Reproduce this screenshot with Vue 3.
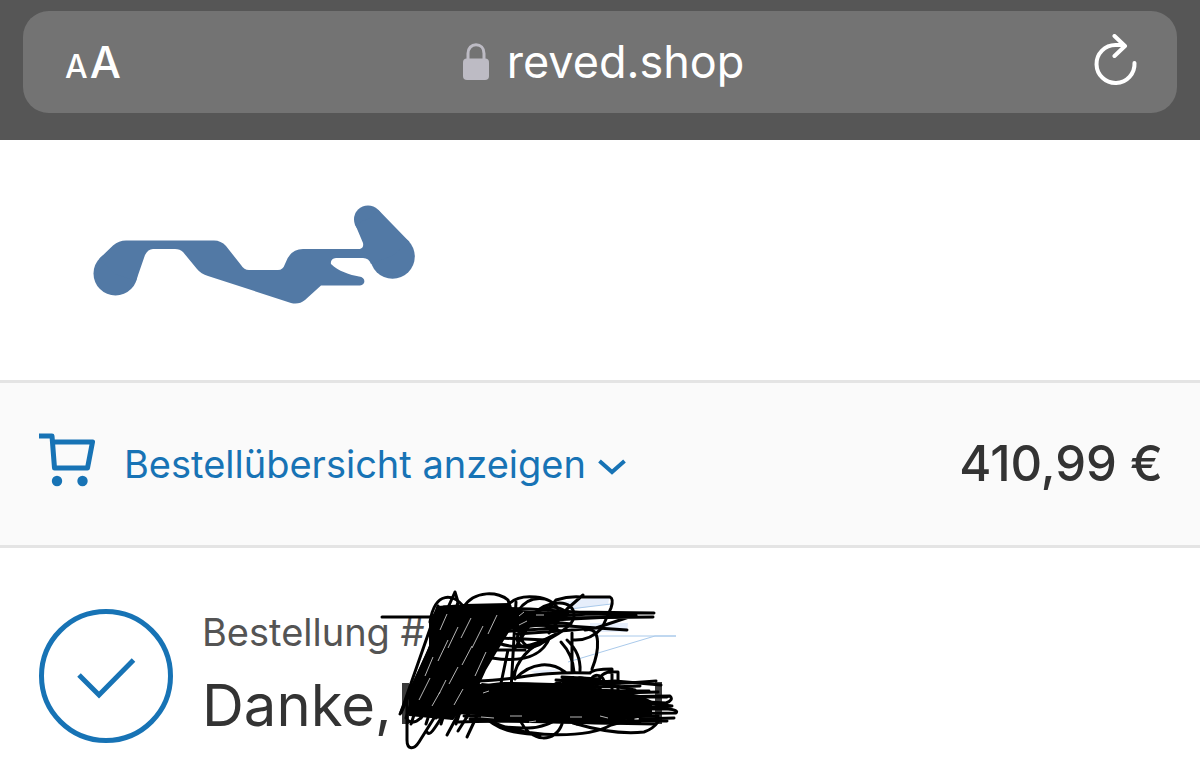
<script setup>
import { ref } from 'vue'

const address = ref('reved.shop')
const total = '410,99 €'

const zigzag = Array.from({ length: 14 }, (_, i) => {
  const top = 438 + i * 5
  const bottom = 401 + i * 5
  return `M${top} ${606 + (i % 4) * 3}L${bottom} ${712 + (i % 3) * 6}`
}).join('')

const band = Array.from({ length: 13 }, (_, i) => {
  const y = 686 + i * 3
  return `M${458 + (i % 3) * 6} ${y}C520 ${y - 3} 590 ${y + 3} ${640 + (i % 4) * 9} ${y + (i % 2) * 2}`
}).join('')
</script>

<template>
  <div class="page">
    <header class="browser">
      <div class="field">
        <button class="text-size" type="button" aria-label="Textgröße">
          <span class="small-a">A</span><span class="large-a">A</span>
        </button>
        <div class="address">
          <svg class="lock" viewBox="0 0 26 38" aria-hidden="true">
            <path d="M5 17V10.500C5 5 8.500 1.800 13 1.800S21 5 21 10.500V17" fill="none" stroke="#bdbbc4" stroke-width="3" />
            <rect x="0" y="15.500" width="26" height="21.500" rx="4" fill="#bdbbc4" />
          </svg>
          <span>{{ address }}</span>
        </div>
        <button class="reload" type="button" aria-label="Neu laden">
          <svg viewBox="0 0 44 52" aria-hidden="true">
            <path d="M40.500 29A19 19 0 1 1 21.500 11H29" />
            <path d="M20.500 2L31 12L20.500 22" />
          </svg>
        </button>
      </div>
    </header>

    <div class="brand">
      <a href="#" aria-label="Startseite">
        <svg class="logo" viewBox="93 204 323 101" aria-hidden="true">
          <g fill="#5279a5">
            <circle cx="115.500" cy="273.500" r="22" />
            <circle cx="368" cy="219.500" r="14" />
            <circle cx="392.500" cy="256.500" r="22.300" />
            <path d="M126 240.500H214Q221 240.500 226 246L241 265Q244 270 249 270H278Q283 270 285 264Q290 249 303 249H360Q364 248 363 243L355 224L368 219L378.500 210L409.500 242L392 256L371 264Q369 258 363 258H336Q330 259 331 264C338 271 350 275 359 276.500C366 277 366 285 360 285.500H321L305 300Q299 305 291 303L208 276Q201 274 197 269L183 252Q180 249 175 249H153Q148 249 145 255L136 281L115 274L99.500 258.500L113 245.500Q119 240.500 126 240.500Z" />
          </g>
        </svg>
      </a>
    </div>

    <section class="summary">
      <button class="summary-toggle" type="button">
        <svg class="cart" viewBox="0 0 56 62" aria-hidden="true">
          <path d="M0 3H13L15.500 35H48.500L53.500 9H14" fill="none" stroke="#1773b5" stroke-width="5" stroke-linejoin="round" />
          <circle cx="18" cy="48" r="5.200" />
          <circle cx="43.500" cy="48" r="5.200" />
        </svg>
        <span>Bestellübersicht anzeigen</span>
        <svg class="chevron" viewBox="0 0 28 22" aria-hidden="true">
          <path d="M1.500 8L14 19L26.500 8" />
        </svg>
      </button>
      <strong class="total">{{ total }}</strong>
    </section>

    <main class="confirmation">
      <svg class="check" viewBox="0 0 134 134" aria-hidden="true">
        <circle cx="67" cy="67" r="64.500" />
        <path d="M40 66L60 86L94.500 51" />
      </svg>
      <div class="message">
        <p>Bestellung #</p>
        <h1>Danke,</h1>
        <svg class="scribble" viewBox="380 588 300 164" aria-hidden="true">
          <g fill="#e6eefb">
            <path d="M560 602L610 596L608 604L575 609Z" />
            <path d="M590 623L628 623L627 632L590 632Z" />
            <path d="M530 671L562 669L540 675Z" />
          </g>
          <g fill="none" stroke="#aacaeb" stroke-width="1">
            <path d="M570 609L611 604M590 636H676M568 662L655 636H676" />
          </g>
          <g fill="#3b3b3b">
            <rect x="402" y="683" width="7" height="41" />
            <rect x="655" y="682" width="7" height="42" />
          </g>
          <path d="M438 606L464 604L509 603L512 627L498 650L486 670L476 692L453 720L409 716L409 690L429 647L429 621Z" />
          <path d="M470 692L482 683L510 686L590 687L640 695L652 701V716L605 723L510 720L456 712Z" />
          <path d="M508 609L534 611L570 612L566 619L545 626L510 630Z" />
          <g class="strokes">
            <path :d="zigzag" />
            <path :d="band" />
            <path d="M382 617H461L571 612L654 613M470 619L653 617M444 607L530 609L636 616M526 625L568 626L627 630M528 620L560 631L596 628L635 615" />
            <path d="M540 617L590 614L636 615M536 621L590 618L630 616" />
            <path d="M455 592L400 714M455 592L458 602L429 711M430 649L401 713" />
            <path d="M407 700V740C407 750 414 750 419 742L456 683M407 720C420 730 430 703 446 681M427 732C431 740 441 715 466 680M447 735L474 685M458 731L486 687M467 737L489 690" />
            <path d="M430 622C435 590 454 594 464 607M463 608C474 589 500 592 508 600L514 619M510 603C521 593 551 595 558 609M518 611C530 593 551 597 557 608" />
            <path d="M548 610L556 600Q569 596 581 597H610Q614 599 611 608L602 628Q590 641 573 640M549 633L567 609L583 595" />
            <path d="M532 615C550 598 574 600 574 615C575 625 555 636 545 641C529 654 510 646 520 631C525 614 552 600 566 612M492 658C530 664 544 652 550 637M498 643C523 652 541 642 556 634" />
            <path d="M514 630Q540 620 571 624M517 634L560 631M529 622C518 634 518 641 530 648M534 618L515 648M516 602L511 690M508 650L500 688M550 638C530 645 515 662 514 678M496 632L557 628M500 638L546 640M492 650L525 650" />
            <path d="M561 642Q573 655 574 672M572 633V671M567 640Q581 653 580 671M585 630C602 625 599 652 592 669" />
            <path d="M515 679C532 661 552 662 565 672M477 681C517 681 530 671 590 673M483 687C508 678 550 690 656 681M590 673Q593 669 612 669V690M598 683Q600 670 618 672V690M590 688C588 670 607 673 604 686M572 696C557 680 588 671 594 685" />
            <path d="M552 685L615 681L661 685M539 687L635 692L635 690M530 690L580 680L635 690M548 690Q574 665 594 690M556 693Q580 664 601 690M556 680L620 683M562 677L600 679" />
            <path d="M464 692L528 703L604 697L670 696Q674 700 666 703L576 698M499 707L602 710L672 706M480 715L580 714L676 713Q679 710 668 709M500 720L600 723L655 724M577 724L650 703L671 706M640 719L674 718" />
            <path d="M487 713C485 727 506 728 528 728C552 728 561 713 571 713M484 715C496 732 520 733 540 735M519 718C531 745 556 742 562 724M493 722C530 740 590 737 611 725L633 719M573 723C607 733 628 734 644 732Q653 729 658 722" />
          </g>
          <path class="gaps" d="M438 661L448 640M461 638L471 618M462 665L472 646M440 630L447 614M475 676L486 652M419 700L430 678M439 694L446 680M425 676L433 657M448 648L458 627M488 634L497 615M449 684L458 667M472 648L483 626M432 706L440 692M454 705L463 689M519 616L524 612M536 615H544M519 625L527 621M483 693L489 691M510 716H522M570 717H582M600 716L608 718M481 717L494 718M529 722L536 721" />
        </svg>
      </div>
    </main>
  </div>
</template>

<style>
body {
  margin: 0;
  background: #fff;
}
</style>

<style scoped>
.page {
  font-family: Inter, "Liberation Sans", sans-serif;
  color: #333;
}

button {
  margin: 0;
  padding: 0;
  border: 0;
  background: none;
  color: inherit;
  font: inherit;
  cursor: pointer;
}

svg {
  display: block;
  flex: none;
}

.browser {
  padding: 11px 23px 27px;
  background: #565656;
}

.field {
  display: grid;
  grid-template-columns: 1fr auto 1fr;
  align-items: center;
  height: 102px;
  padding: 0 39px 0 42px;
  box-sizing: border-box;
  border-radius: 26px;
  background: #737373;
  color: #fff;
}

.text-size {
  display: flex;
  align-items: baseline;
  gap: 2px;
  justify-self: start;
  font-weight: 500;
}

.small-a {
  font-size: 32px;
}

.large-a {
  font-size: 44px;
}

.address {
  display: flex;
  align-items: center;
  gap: 18px;
  padding-left: 4px;
  font-size: 45px;
  line-height: 60px;
}

.lock {
  width: 26px;
  height: 38px;
}

.reload {
  justify-self: end;
}

.reload svg {
  width: 44px;
  height: 52px;
  margin-bottom: 4px;
  fill: none;
  stroke: #fff;
  stroke-width: 4;
  stroke-linecap: round;
  stroke-linejoin: round;
}

.brand {
  display: flex;
  padding: 64px 93px 75px;
}

.logo {
  width: 323px;
  height: 101px;
}

.summary {
  display: flex;
  align-items: center;
  justify-content: space-between;
  padding: 50px 37px 50px 39px;
  border-top: 3px solid #e4e4e4;
  border-bottom: 3px solid #e4e4e4;
  background: #fafafa;
}

.summary-toggle {
  display: flex;
  align-items: center;
  color: #1773b5;
  font-size: 38px;
  line-height: 60px;
}

.cart {
  width: 56px;
  height: 62px;
  margin-right: 29px;
  fill: #1773b5;
}

.chevron {
  width: 28px;
  height: 22px;
  margin-left: 12px;
  fill: none;
  stroke: #1773b5;
  stroke-width: 4;
}

.total {
  font-size: 49px;
  font-weight: 500;
  line-height: 60px;
}

.confirmation {
  display: flex;
  align-items: flex-start;
  gap: 29px;
  padding: 61px 39px 40px;
}

.check {
  width: 134px;
  height: 134px;
  fill: none;
  stroke: #1773b5;
  stroke-width: 5;
}

.message {
  position: relative;
}

.message p {
  margin: 0;
  color: #545454;
  font-size: 38px;
  line-height: 46px;
}

.message h1 {
  margin: 0;
  font-size: 58px;
  font-weight: 400;
  line-height: 100px;
}

.scribble {
  position: absolute;
  top: -21px;
  left: 178px;
  width: 300px;
  height: 164px;
}

.strokes {
  fill: none;
  stroke: #000;
  stroke-width: 3;
  stroke-linecap: round;
  stroke-linejoin: round;
}

.gaps {
  fill: none;
  stroke: #b5b5b5;
  stroke-width: 1;
}
</style>
